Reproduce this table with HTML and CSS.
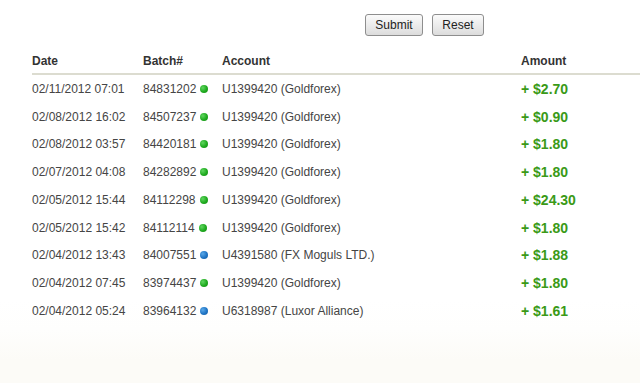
FILE: index.html
```html
<!DOCTYPE html>
<html>
<head>
<meta charset="utf-8">
<link rel="stylesheet" href="styles.css">
</head>
<body>
<div class="page">
  <form class="actions">
    <button type="button" class="btn btn-submit">Submit</button>
    <button type="button" class="btn btn-reset">Reset</button>
  </form>
  <div class="history">
    <div class="row head">
      <div>Date</div><div>Batch#</div><div>Account</div><div>Amount</div>
    </div>
    <div class="row"><div>02/11/2012 07:01</div><div class="batch">84831202<span class="dot green"></span></div><div>U1399420 (Goldforex)</div><div class="amt">+ $2.70</div></div>
    <div class="row"><div>02/08/2012 16:02</div><div class="batch">84507237<span class="dot green"></span></div><div>U1399420 (Goldforex)</div><div class="amt">+ $0.90</div></div>
    <div class="row"><div>02/08/2012 03:57</div><div class="batch">84420181<span class="dot green"></span></div><div>U1399420 (Goldforex)</div><div class="amt">+ $1.80</div></div>
    <div class="row"><div>02/07/2012 04:08</div><div class="batch">84282892<span class="dot green"></span></div><div>U1399420 (Goldforex)</div><div class="amt">+ $1.80</div></div>
    <div class="row"><div>02/05/2012 15:44</div><div class="batch">84112298<span class="dot green"></span></div><div>U1399420 (Goldforex)</div><div class="amt">+ $24.30</div></div>
    <div class="row"><div>02/05/2012 15:42</div><div class="batch">84112114<span class="dot green"></span></div><div>U1399420 (Goldforex)</div><div class="amt">+ $1.80</div></div>
    <div class="row"><div>02/04/2012 13:43</div><div class="batch">84007551<span class="dot blue"></span></div><div>U4391580 (FX Moguls LTD.)</div><div class="amt">+ $1.88</div></div>
    <div class="row"><div>02/04/2012 07:45</div><div class="batch">83974437<span class="dot green"></span></div><div>U1399420 (Goldforex)</div><div class="amt">+ $1.80</div></div>
    <div class="row"><div>02/04/2012 05:24</div><div class="batch">83964132<span class="dot blue"></span></div><div>U6318987 (Luxor Alliance)</div><div class="amt">+ $1.61</div></div>
  </div>
</div>
</body>
</html>
```
FILE: styles.css
```css
html, body {
  margin: 0;
  padding: 0;
}
body {
  width: 640px;
  height: 383px;
  overflow: hidden;
  background: #fcfbf7;
  font-family: "Liberation Sans", Arial, sans-serif;
  font-size: 12px;
  color: #454545;
}
.page {
  background: linear-gradient(to bottom, #ffffff 0, #ffffff 300px, #fefefd 330px, #fcfbf7 360px);
  height: 383px;
}
.actions {
  display: flex;
  gap: 9px;
  padding: 14px 0 0 365px;
  margin: 0;
}
.btn {
  height: 22px;
  padding: 0;
  font-family: "Liberation Sans", Arial, sans-serif;
  font-size: 12px;
  color: #222;
  border: 1px solid #8e8e8e;
  border-radius: 3px;
  background: linear-gradient(to bottom, #fbfbfb 0%, #ececec 50%, #dcdcdc 100%);
}
.btn-submit { width: 58px; }
.btn-reset { width: 52px; }
.history {
  margin-top: 12px;
  margin-left: 32px;
}
.row {
  display: grid;
  grid-template-columns: 111px 79px 299px 1fr;
  align-items: center;
  height: 27.75px;
}
.row.head {
  height: 25px;
  border-bottom: 2px solid #dcdcd0;
  font-weight: bold;
  color: #333;
}
.batch {
  display: flex;
  align-items: center;
}
.dot {
  display: inline-block;
  width: 8px;
  height: 8px;
  border-radius: 50%;
  margin-left: 4px;
}
.dot.green {
  background: radial-gradient(circle at 35% 35%, #5fd65f 0, #1faa1f 55%, #138a13 100%);
}
.dot.blue {
  background: radial-gradient(circle at 35% 35%, #5aa8e8 0, #1f74c4 55%, #135a9c 100%);
}
.amt {
  font-weight: bold;
  font-size: 14px;
  color: #3a9a17;
}
```
